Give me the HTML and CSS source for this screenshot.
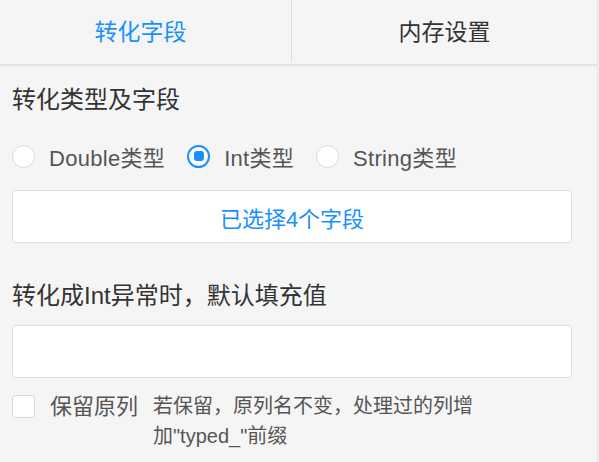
FILE: index.html
```html
<!DOCTYPE html>
<html lang="zh-CN">
<head>
<meta charset="utf-8">
<link rel="stylesheet" href="styles.css">
</head>
<body>
<div class="panel">
  <div class="tabs">
    <div class="tab tab-active">转化字段</div>
    <div class="tab">内存设置</div>
  </div>
  <div class="content">
    <div class="title title-first">转化类型及字段</div>
    <div class="radios">
      <label class="radio"><span class="radio-dot"></span><span class="radio-text">Double类型</span></label>
      <label class="radio"><span class="radio-dot radio-checked"></span><span class="radio-text">Int类型</span></label>
      <label class="radio"><span class="radio-dot"></span><span class="radio-text">String类型</span></label>
    </div>
    <div class="select-btn">已选择4个字段</div>
    <div class="title title-second">转化成Int异常时，默认填充值</div>
    <div class="input"></div>
    <div class="keep-row">
      <span class="checkbox"></span>
      <span class="keep-label">保留原列</span>
      <span class="keep-desc">若保留，原列名不变，处理过的列增加"typed_"前缀</span>
    </div>
  </div>
</div>
</body>
</html>
```
FILE: styles.css
```css
html, body {
  margin: 0;
  padding: 0;
  background: #f5f5f5;
}
body {
  font-family: "Liberation Sans", "Noto Sans CJK SC", sans-serif;
  color: #333;
}
.panel {
  width: 597px;
  min-height: 462px;
  border-right: 1px solid #e3e3e3;
  box-sizing: content-box;
}
.tabs {
  display: flex;
  height: 64px;
  border-bottom: 2px solid #e4e4e4;
}
.tab {
  flex: 1;
  display: flex;
  align-items: center;
  justify-content: center;
  font-size: 23px;
  color: #333;
  padding-bottom: 4px;
  box-sizing: border-box;
}
.tab-active {
  flex: 0 0 292px;
  color: #1890ff;
  padding-right: 10px;
  border-right: 1px solid #dcdcdc;
  margin-bottom: 2px;
  padding-bottom: 2px;
}
.content {
  padding: 0 25px 0 12px;
}
.title {
  font-size: 24px;
  line-height: 34px;
  color: #333;
}
.title-first {
  padding-top: 17px;
}
.radios {
  display: flex;
  align-items: center;
  height: 30px;
  margin-top: 24px;
  gap: 22px;
}
.radio {
  display: flex;
  align-items: center;
  gap: 14px;
}
.radio-dot {
  width: 23px;
  height: 23px;
  border: 1px solid #d9d9d9;
  border-radius: 50%;
  background: #fff;
  box-sizing: border-box;
  display: flex;
  align-items: center;
  justify-content: center;
}
.radio-checked {
  border: 2px solid #1890ff;
}
.radio-checked::after {
  content: "";
  width: 10px;
  height: 10px;
  border-radius: 3px;
  background: #1890ff;
}
.radio-text {
  font-size: 22px;
  letter-spacing: 0.3px;
  color: #555;
}
.select-btn {
  margin-top: 19px;
  height: 53px;
  border: 1.5px solid #dcdcdc;
  border-radius: 4px;
  background: #fff;
  box-sizing: border-box;
  display: flex;
  align-items: center;
  justify-content: center;
  font-size: 22px;
  color: #1890ff;
}
.title-second {
  margin-top: 36px;
}
.input {
  margin-top: 12px;
  height: 53px;
  border: 1.5px solid #dcdcdc;
  border-radius: 4px;
  background: #fff;
  box-sizing: border-box;
}
.keep-row {
  display: flex;
  align-items: flex-start;
  margin-top: 17px;
}
.checkbox {
  flex: 0 0 auto;
  width: 23px;
  height: 23px;
  border: 1px solid #d9d9d9;
  border-radius: 3px;
  background: #fff;
  box-sizing: border-box;
}
.keep-label {
  margin-left: 15px;
  font-size: 22px;
  line-height: 23px;
  color: #555;
}
.keep-desc {
  margin-left: 15px;
  width: 330px;
  font-size: 20px;
  line-height: 30px;
  margin-top: -4px;
  color: #555;
}
```
